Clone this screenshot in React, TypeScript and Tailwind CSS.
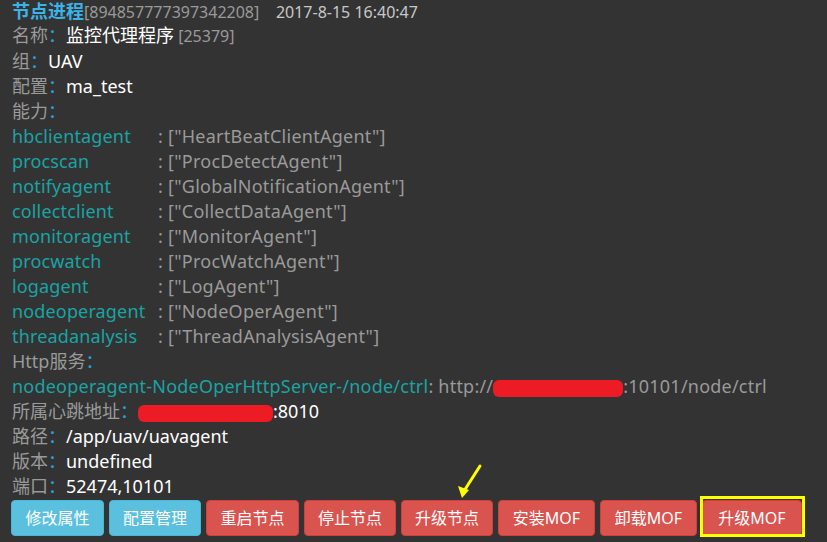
import React from "react";

const font = { fontFamily: '"Noto Sans", "Noto Sans CJK SC", sans-serif' };

const caps: [string, string][] = [
  ["hbclientagent", '["HeartBeatClientAgent"]'],
  ["procscan", '["ProcDetectAgent"]'],
  ["notifyagent", '["GlobalNotificationAgent"]'],
  ["collectclient", '["CollectDataAgent"]'],
  ["monitoragent", '["MonitorAgent"]'],
  ["procwatch", '["ProcWatchAgent"]'],
  ["logagent", '["LogAgent"]'],
  ["nodeoperagent", '["NodeOperAgent"]'],
  ["threadanalysis", '["ThreadAnalysisAgent"]'],
];

function Label({ children }: { children: React.ReactNode }) {
  return (
    <span className="text-[#9a9a9a]">
      {children}
      <span className="text-[#2a9fd6]">：</span>
    </span>
  );
}

function Redact({ w }: { w: number }) {
  return (
    <span
      className="inline-block h-[17px] align-middle rounded-[6px] bg-[#ed1c24]"
      style={{ width: w }}
    />
  );
}

const btnBase = "h-[36px] rounded-[4px] text-white text-center";
const blueBtn = "bg-[#5bc0de] border border-[#46b8da]";
const redBtn = "bg-[#d9534f] border border-[#d43f3a]";

export default function App() {
  return (
    <div
      className="relative w-[827px] h-[542px] overflow-hidden bg-[#333333] pl-[12px] text-[18px] leading-[25px] text-white"
      style={font}
    >
      <div>
        <div className="whitespace-pre pt-[2px] pb-[1px] leading-[19px]">
          <span className="font-bold text-[#3bb3e6]">节点进程</span>
          <span className="text-[#9a9a9a] text-[16px]">[894857777397342208]</span>
          <span className="text-[#c8c8c8] text-[16px]">{"    2017-8-15 16:40:47"}</span>
        </div>
        <div>
          <Label>名称</Label>
          <span>监控代理程序</span>
          <span className="text-[#9a9a9a] text-[16px]"> [25379]</span>
        </div>
        <div>
          <Label>组</Label>UAV
        </div>
        <div>
          <Label>配置</Label>ma_test
        </div>
        <div>
          <Label>能力</Label>
        </div>
        {caps.map(([k, v]) => (
          <div key={k} className="flex">
            <span className="w-[146px] text-[#1aa3a3] tracking-[0.15px]">{k}</span>
            <span className="text-[#9a9a9a] whitespace-pre tracking-[0.25px]">: {v}</span>
          </div>
        ))}
        <div>
          <Label>Http服务</Label>
        </div>
        <div className="whitespace-nowrap tracking-[0.22px]">
          <span className="text-[#1aa3a3]">nodeoperagent-NodeOperHttpServer-/node/ctrl</span>
          <span className="text-[#9a9a9a]">: http://</span>
          <Redact w={130} />
          <span className="text-[#9a9a9a]">:10101/node/ctrl</span>
        </div>
        <div>
          <Label>所属心跳地址</Label>
          <Redact w={135} />
          <span>:8010</span>
        </div>
        <div>
          <Label>路径</Label>/app/uav/uavagent
        </div>
        <div>
          <Label>版本</Label>undefined
        </div>
        <div>
          <Label>端口</Label>52474,10101
        </div>
      </div>
      <div className="mt-[1px] -ml-[1px] flex gap-[5px] text-[16px]">
        <button className={`${btnBase} ${blueBtn} w-[93px]`}>修改属性</button>
        <button className={`${btnBase} ${blueBtn} w-[92px]`}>配置管理</button>
        <button className={`${btnBase} ${redBtn} w-[93px]`}>重启节点</button>
        <button className={`${btnBase} ${redBtn} w-[92px]`}>停止节点</button>
        <button className={`${btnBase} ${redBtn} w-[92px]`}>升级节点</button>
        <button className={`${btnBase} ${redBtn} w-[97px]`}>安装MOF</button>
        <button className={`${btnBase} ${redBtn} w-[97px]`}>卸载MOF</button>
        <div className="relative">
          <button className={`${btnBase} ${redBtn} w-[100px]`}>升级MOF</button>
          <div className="absolute -left-[2px] -right-[3px] -top-[4px] -bottom-[1px] border-[3px] border-[#ffff00]" />
        </div>
      </div>
      <svg className="absolute left-[455px] top-[462px]" width="30" height="40" viewBox="0 0 30 40">
        <line x1="25" y1="4" x2="9" y2="29" stroke="#ffff00" strokeWidth="3" strokeLinecap="round" />
        <polygon points="3,24 14,28 7,36" fill="#ffff00" />
      </svg>
    </div>
  );
}
